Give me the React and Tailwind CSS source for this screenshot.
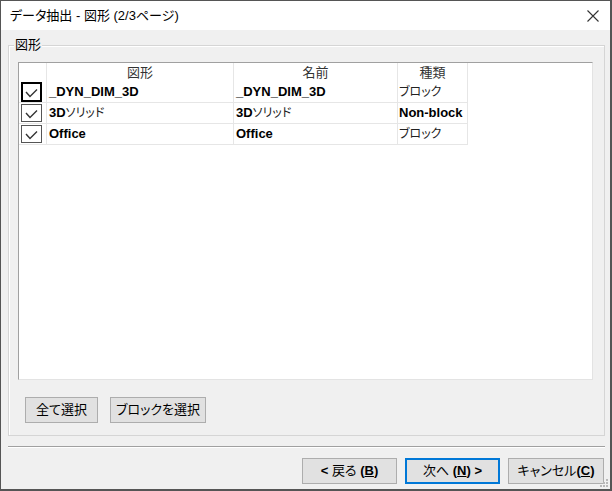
import React from "react";

function Check({ focus }) {
  return (
    <div
      className={
        focus
          ? "ml-[2px] w-[21px] h-[20px] border-2 border-black bg-white flex items-center justify-center"
          : "ml-[2px] mt-[1px] w-[21px] h-[18px] border border-[#555] bg-white flex items-center justify-center"
      }
    >
      <svg width="17" height="14" viewBox="0 0 17 14">
        <polyline points="3,7 7,11.5 14,4.5" fill="none" stroke="#333" strokeWidth="1.4" />
      </svg>
    </div>
  );
}

function Row({ focus, c1, c2, c3 }) {
  return (
    <div className="flex h-[21px] w-[449px] border-b border-[#e6e6e6]">
      <div className="w-[28px] border-r border-[#e6e6e6] flex items-start">
        <Check focus={focus} />
      </div>
      <div className="w-[187px] border-r border-[#e6e6e6] pl-[2px] flex items-center text-[13px] font-bold whitespace-nowrap">
        {c1}
      </div>
      <div className="w-[164px] border-r border-[#e6e6e6] pl-[2px] flex items-center text-[13px] font-bold whitespace-nowrap">
        {c2}
      </div>
      <div className="w-[70px] border-r border-[#e6e6e6] pl-[1px] flex items-center text-[13px] whitespace-nowrap">
        {c3}
      </div>
    </div>
  );
}

const Solid = () => (
  <>
    3D<span className="font-normal text-[12px] text-[#222]">ソリッド</span>
  </>
);
const Block = () => <span className="font-normal text-[12px] text-[#222]">ブロック</span>;

export default function App() {
  return (
    <div className="relative w-[612px] h-[491px] bg-[#f0f0f0] border-l border-t border-r-2 border-b-2 border-[#555] flex flex-col text-black font-['Liberation_Sans','Noto_Sans_CJK_JP',sans-serif] [font-feature-settings:'palt'] overflow-hidden">
      <div className="h-[29px] shrink-0 bg-white flex items-center justify-between pl-[9px] pr-[11px]">
        <span className="text-[13px] leading-[16px]">データ抽出 - 図形 (2/3ページ)</span>
        <svg width="12" height="12" viewBox="0 0 12 12">
          <path d="M0.5 0.5 L11.5 11.5 M11.5 0.5 L0.5 11.5" stroke="#333" strokeWidth="1.1" fill="none" />
        </svg>
      </div>
      <div className="flex-1 flex flex-col pl-[7px] pr-[5px]">
        <div className="relative mt-[15px] h-[391px] border border-[#d5d5d5] shadow-[inset_1px_1px_0_#ffffff] pl-[9px] pt-[16px]">
          <span className="absolute left-[5px] top-[-9px] px-[1px] bg-[#f0f0f0] text-[13px] leading-[16px]">図形</span>
          <div className="w-[575px] h-[318px] bg-white border border-[#a0a0a0] border-r-[#e3e3e3] border-b-[#e3e3e3]">
            <div className="flex h-[19px] w-[449px] text-[13px] text-[#333]">
              <div className="w-[28px] border-r border-[#e6e6e6]" />
              <div className="w-[187px] border-r border-[#e6e6e6] flex items-center justify-center">図形</div>
              <div className="w-[164px] border-r border-[#e6e6e6] flex items-center justify-center">名前</div>
              <div className="w-[70px] border-r border-[#e6e6e6] flex items-center justify-center">種類</div>
            </div>
            <Row focus c1="_DYN_DIM_3D" c2="_DYN_DIM_3D" c3={<Block />} />
            <Row c1={<Solid />} c2={<Solid />} c3={<span className="font-bold">Non-block</span>} />
            <Row c1="Office" c2="Office" c3={<Block />} />
          </div>
          <div className="mt-[17px] ml-[7px] flex gap-[12px]">
            <button className="w-[73px] h-[26px] bg-[#e1e1e1] border border-[#adadad] text-[13px] flex items-center justify-center">
              全て選択
            </button>
            <button className="w-[96px] h-[26px] bg-[#e1e1e1] border border-[#adadad] text-[13px] flex items-center justify-center">
              ブロックを選択
            </button>
          </div>
        </div>
        <div className="mt-[10px] h-[2px] border-t border-[#a0a0a0] border-b border-b-white" />
        <div className="mt-[10px] mr-[1px] flex justify-end gap-[8px]">
          <button className="w-[95px] h-[26px] bg-[#e1e1e1] border border-[#adadad] text-[13px] flex items-center justify-center whitespace-pre">
            <span className="font-bold">&lt;</span> 戻る <span className="font-bold">(<span className="underline">B</span>)</span>
          </button>
          <button className="w-[95px] h-[26px] bg-[#e1e1e1] border border-[#0078d7] shadow-[inset_0_0_0_1px_#0078d7] text-[13px] flex items-center justify-center whitespace-pre">
            次へ <span className="font-bold">(<span className="underline">N</span>) &gt;</span>
          </button>
          <button className="w-[96px] h-[26px] bg-[#e1e1e1] border border-[#adadad] text-[13px] flex items-center justify-center whitespace-pre">
            キャンセル<span className="font-bold">(<span className="underline">C</span>)</span>
          </button>
        </div>
      </div>
      <svg className="absolute right-[1px] bottom-[1px]" width="9" height="9" viewBox="0 0 9 9">
        <rect x="6" y="0" width="2" height="2" fill="#b8b8b8" />
        <rect x="3" y="3" width="2" height="2" fill="#b8b8b8" />
        <rect x="6" y="3" width="2" height="2" fill="#b8b8b8" />
        <rect x="0" y="6" width="2" height="2" fill="#b8b8b8" />
        <rect x="3" y="6" width="2" height="2" fill="#b8b8b8" />
        <rect x="6" y="6" width="2" height="2" fill="#b8b8b8" />
      </svg>
    </div>
  );
}
